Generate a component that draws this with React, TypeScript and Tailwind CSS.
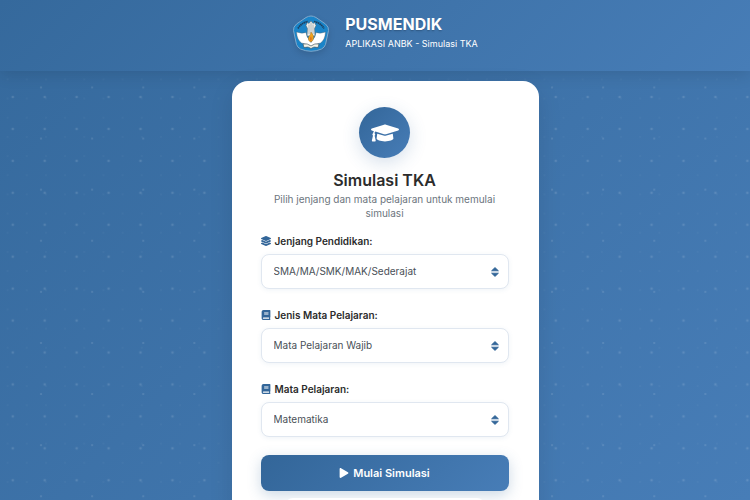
import React from "react";
import { FaBook, FaGraduationCap, FaLayerGroup, FaPlay } from "react-icons/fa";

const fields = [
  {
    id: "jenjang",
    label: "Jenjang Pendidikan:",
    icon: FaLayerGroup,
    options: ["SMA/MA/SMK/MAK/Sederajat", "SMP/MTs/Sederajat", "SD/MI/Sederajat"],
  },
  {
    id: "jenis",
    label: "Jenis Mata Pelajaran:",
    icon: FaBook,
    options: ["Mata Pelajaran Wajib", "Mata Pelajaran Pilihan"],
  },
  {
    id: "mapel",
    label: "Mata Pelajaran:",
    icon: FaBook,
    options: ["Matematika", "Bahasa Indonesia", "Bahasa Inggris"],
  },
];

function Dots() {
  return (
    <svg className="absolute inset-0 h-full w-full" aria-hidden="true">
      <defs>
        <pattern id="dots-lg" width="31.94" height="31.94" x="-3.2" y="-14.8" patternUnits="userSpaceOnUse">
          <circle cx="15.97" cy="15.97" r="1.3" fill="#fff" fillOpacity="0.13" />
        </pattern>
        <pattern id="dots-md" width="51.1" height="51.1" x="15.5" y="10.8" patternUnits="userSpaceOnUse">
          <circle cx="25.55" cy="25.55" r="1.1" fill="#fff" fillOpacity="0.13" />
        </pattern>
        <pattern id="dots-sm" width="19.17" height="19.17" x="-2" y="-6.9" patternUnits="userSpaceOnUse">
          <circle cx="9.58" cy="9.58" r="0.9" fill="#fff" fillOpacity="0.04" />
        </pattern>
      </defs>
      <rect width="100%" height="100%" fill="url(#dots-lg)" />
      <rect width="100%" height="100%" fill="url(#dots-md)" />
      <rect width="100%" height="100%" fill="url(#dots-sm)" />
    </svg>
  );
}

function Logo() {
  return (
    <svg viewBox="0 0 76 76" className="h-[38px] w-[38px] drop-shadow-md" role="img" aria-label="Tut Wuri Handayani">
      <path
        d="M38 2 Q43 2 48 5 L67 18 Q74 24 73 31 L67 59 Q65 65 59 68 Q38 77 17 68 Q11 65 9 59 L3 31 Q2 24 9 18 L28 5 Q33 2 38 2Z"
        fill="#1a84c8"
        stroke="#7fa9cc"
        strokeWidth="2"
      />
      <path d="M12 27 Q18 16 32 13 M44 13 Q58 16 64 27" fill="none" stroke="#1c3f5e" strokeWidth="3.5" strokeDasharray="3 1" />
      <path d="M28 21 L31 15 L34 17 L38 12 L42 17 L45 15 L48 21 L45 27 L46 42 L30 42 L31 27Z" fill="#eceeec" stroke="#56656c" strokeWidth="1" />
      <path d="M34 19 V38 M38 16 V36 M42 19 V38" stroke="#8d989b" strokeWidth="1.3" />
      <path
        d="M9 34 Q19 38 28 35 Q29 45 36 51 L38 55 L40 51 Q47 45 48 35 Q57 38 67 34 Q66 50 57 56 Q47 58 40 61 L38 63 L36 61 Q29 58 19 56 Q10 50 9 34Z"
        fill="#fff"
        stroke="#52616a"
        strokeWidth="0.8"
      />
      <path d="M22 58 Q31 56 38 62 Q45 56 54 58 L52 65 Q43 62 38 67 Q33 62 24 65Z" fill="#f4f4ea" stroke="#3d4c52" strokeWidth="1.2" />
      <path d="M38 34 Q46 42 42 50 Q40 54 37 54 Q31 51 33 44 Q37 41 38 34Z" fill="#f3a51d" stroke="#8a6a35" strokeWidth="0.8" />
      <path d="M38 42 Q41 47 38 52 Q34 49 36 46Z" fill="#e0741b" />
    </svg>
  );
}

function SortCaret() {
  return (
    <svg viewBox="0 0 8 10" className="pointer-events-none absolute top-1/2 right-2.5 h-2.5 w-2 -translate-y-1/2" aria-hidden="true">
      <path d="M4 0.6 L7.4 3.8 H0.6Z M4 9.4 L0.6 6.2 H7.4Z" fill="#336699" stroke="#336699" strokeWidth="0.9" strokeLinejoin="round" />
    </svg>
  );
}

export default function App() {
  return (
    <div className="relative flex h-screen flex-col overflow-hidden bg-linear-135 from-[#35699c] to-[#477db7] font-['Inter','Liberation_Sans',sans-serif]">
      <Dots />
      <header className="relative flex shrink-0 justify-center bg-linear-135 from-[#35699c] to-[#477db7] pt-3.5 pb-[18px] pl-5 shadow-[0_3px_16px_rgba(0,0,0,0.12)]">
        <div className="flex items-center gap-[15px]">
          <Logo />
          <div className="text-white">
            <h1 className="text-base leading-5 font-bold text-shadow-sm">PUSMENDIK</h1>
            <p className="text-[9px] leading-[19px]">APLIKASI ANBK - Simulasi TKA</p>
          </div>
        </div>
      </header>

      <main className="relative flex justify-center pt-2.5 pl-5">
        <div className="w-full max-w-[307px] rounded-2xl bg-white pt-[26px] pr-[30px] pb-8 pl-[29px] shadow-[0_8px_24px_rgba(0,0,0,0.1)]">
          <div className="mx-auto flex size-[51px] items-center justify-center rounded-full bg-linear-135 from-[#336699] to-[#477db7] shadow-[0_5px_18px_rgba(51,102,153,0.2)]">
            <FaGraduationCap className="size-7 text-white" />
          </div>
          <h2 className="mt-3 text-center text-base leading-5 font-semibold text-[#2c2c2c]">Simulasi TKA</h2>
          <p className="mx-auto mt-0.5 max-w-[230px] text-center text-[10px] leading-[14px] text-[#6c757d]">
            Pilih jenjang dan mata pelajaran untuk memulai simulasi
          </p>

          <form className="mt-[13px]">
            {fields.map(({ id, label, icon: Icon, options }) => (
              <div key={id} className="mb-[18px]">
                <label htmlFor={id} className="flex items-center gap-1 text-[10px] leading-4 font-semibold text-[#2c2c2c]">
                  <Icon className="size-2.5 text-[#336699]" />
                  {label}
                </label>
                <div className="relative mt-[5px]">
                  <select
                    id={id}
                    className="h-[35px] w-full appearance-none rounded-lg border border-[#e0e7f0] bg-white pr-6 pl-3 text-[10px] text-[#495057] shadow-[0_1px_5px_rgba(51,102,153,0.08)]"
                  >
                    {options.map((option) => (
                      <option key={option}>{option}</option>
                    ))}
                  </select>
                  <SortCaret />
                </div>
              </div>
            ))}
            <button
              type="button"
              className="flex h-9 w-full items-center justify-center gap-1 rounded-lg bg-linear-135 from-[#336699] to-[#477db7] text-[11px] font-semibold text-white shadow-[0_4px_14px_rgba(51,102,153,0.25)]"
            >
              <FaPlay className="size-2.5" />
              Mulai Simulasi
            </button>
          </form>
          <div className="relative mx-6 mt-[7px] h-8 rounded-lg bg-white" />
        </div>
      </main>
    </div>
  );
}
